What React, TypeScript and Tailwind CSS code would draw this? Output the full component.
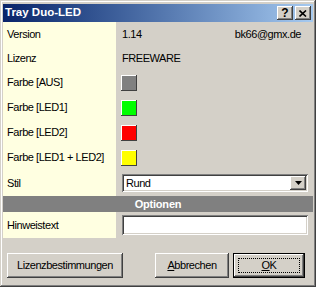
import React from "react";

const raised =
  "shadow-[inset_-1px_-1px_#404040,inset_1px_1px_#ffffff,inset_-2px_-2px_#808080,inset_2px_2px_#d4d0c8]";
const sunken =
  "shadow-[inset_1px_1px_#808080,inset_-1px_-1px_#ffffff,inset_2px_2px_#404040,inset_-2px_-2px_#d4d0c8]";

function Swatch({ color }: { color: string }) {
  return (
    <div
      className={`w-[16px] h-[16px] shadow-[inset_-1px_-1px_#404040,inset_1px_1px_#ffffff]`}
      style={{ backgroundColor: color }}
    />
  );
}

function Row({
  label,
  h,
  children,
}: {
  label: string;
  h: string;
  children?: React.ReactNode;
}) {
  return (
    <div className={`flex ${h}`}>
      <div className="w-[113px] bg-[#ffffe1] flex items-center pl-[4px] text-black">{label}</div>
      <div className="flex-1 flex items-center">{children}</div>
    </div>
  );
}

export default function App() {
  return (
    <div
      className="w-[316px] h-[287px] bg-[#d4d0c8] flex flex-col p-[3px] shadow-[inset_-1px_-1px_#404040,inset_1px_1px_#d4d0c8,inset_-2px_-2px_#808080,inset_2px_2px_#ffffff] text-[11px] tracking-[-0.45px] text-black"
      style={{ fontFamily: '"Liberation Sans", Arial, sans-serif' }}
    >
      {/* Title bar */}
      <div className="mt-[1px] h-[18px] flex items-center bg-linear-to-r from-[#0a246a] to-[#a6caf0] pl-[2px] pr-[2px]">
        <span className="text-white font-bold tracking-[0px] text-[11.5px]">Tray Duo-LED</span>
        <div className="ml-auto flex items-center">
          <div className={`w-[16px] h-[14px] bg-[#d4d0c8] ${raised} flex items-center justify-center font-bold text-[12px] leading-none tracking-normal`}>
            ?
          </div>
          <div className={`ml-[2px] w-[16px] h-[14px] bg-[#d4d0c8] ${raised} flex items-center justify-center`}>
            <svg width="8" height="7" viewBox="0 0 8 7">
              <path d="M0.5 0.5 L7 6.5 M7 0.5 L0.5 6.5" stroke="#000" strokeWidth="1.6" />
            </svg>
          </div>
        </div>
      </div>

      {/* Table */}
      <div className="flex flex-col h-[216px]">
        <Row label="Version" h="h-[24px]">
          <div className="flex w-full pl-[6px] pr-[12px] justify-between">
            <span>1.14</span>
            <span>bk66@gmx.de</span>
          </div>
        </Row>
        <Row label="Lizenz" h="h-[24px]">
          <span className="pl-[6px]">FREEWARE</span>
        </Row>
        <Row label="Farbe [AUS]" h="h-[25px]">
          <div className="pl-[5px]">
            <Swatch color="#808080" />
          </div>
        </Row>
        <Row label="Farbe [LED1]" h="h-[25px]">
          <div className="pl-[5px]">
            <Swatch color="#00ff00" />
          </div>
        </Row>
        <Row label="Farbe [LED2]" h="h-[25px]">
          <div className="pl-[5px]">
            <Swatch color="#ff0000" />
          </div>
        </Row>
        <Row label="Farbe [LED1 + LED2]" h="h-[25px]">
          <div className="pl-[5px]">
            <Swatch color="#ffff00" />
          </div>
        </Row>
        <Row label="Stil" h="h-[26px]">
          <div className="w-full pl-[6px] pr-[5px]">
            <div className={`h-[18px] bg-white ${sunken} flex items-center pl-[4px] pr-[2px]`}>
              <span>Rund</span>
              <div className={`ml-auto w-[16px] h-[14px] bg-[#d4d0c8] ${raised} flex items-center justify-center`}>
                <svg width="7" height="4" viewBox="0 0 7 4">
                  <path d="M0 0 H7 L3.5 4 Z" fill="#000" />
                </svg>
              </div>
            </div>
          </div>
        </Row>
        <div className="h-[16px] bg-[#808080] flex items-center justify-center text-white font-bold tracking-[-0.2px]">
          Optionen
        </div>
        <Row label="Hinweistext" h="h-[26px]">
          <div className="w-full pl-[6px] pr-[5px]">
            <div className={`h-[20px] bg-white ${sunken}`} />
          </div>
        </Row>
      </div>

      {/* Buttons */}
      <div className="flex mt-[15px] h-[25px]">
        <div className={`ml-[4px] w-[116px] h-full bg-[#d4d0c8] ${raised} flex items-center justify-center`}>
          Lizenzbestimmungen
        </div>
        <div className={`ml-auto w-[74px] h-full bg-[#d4d0c8] ${raised} flex items-center justify-center`}>
          <span>
            <span className="underline">A</span>bbrechen
          </span>
        </div>
        <div className="ml-[4px] mr-[8px] w-[72px] h-full bg-[#d4d0c8] border border-black">
          <div className={`w-full h-full ${raised} p-[4px]`}>
            <div className="w-full h-full border border-dotted border-black flex items-center justify-center">
              <span>
                <span className="underline">O</span>K
              </span>
            </div>
          </div>
        </div>
      </div>
    </div>
  );
}
